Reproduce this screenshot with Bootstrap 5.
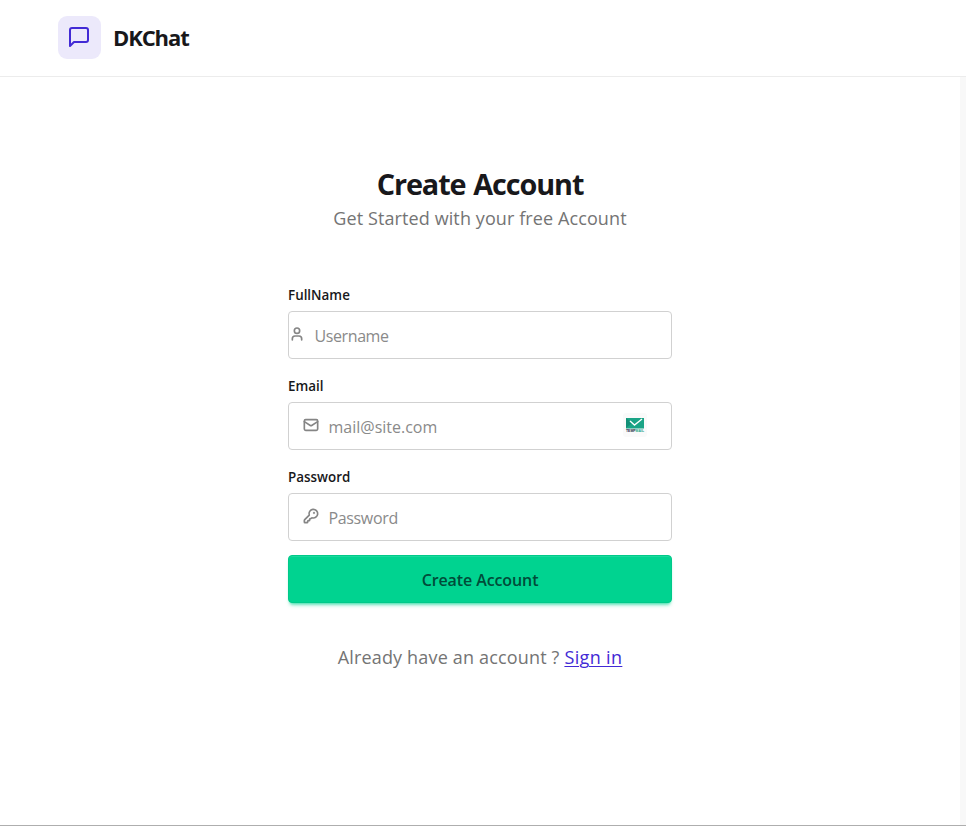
<!DOCTYPE html>
<html lang="en">
<head>
<meta charset="utf-8">
<meta name="viewport" content="width=device-width, initial-scale=1">
<title>DKChat</title>
<link href="https://cdn.jsdelivr.net/npm/bootstrap@5.3.0/dist/css/bootstrap.min.css" rel="stylesheet">
<style>
  body { font-family: "Segoe UI", "Open Sans", "Noto Sans", sans-serif; color: #18181b; height: 100vh; overflow: hidden; border-bottom: 1px solid #aeaeae; background: #fff; }
  .topbar { height: 77px; border-bottom: 1px solid #ececec; padding: 0 58px 2px; flex: none; }
  .logo-box { width: 43px; height: 43px; border-radius: 9px; background: #ece9fb; color: #422ad5; }
  .logo-box svg { margin: 0 1px 1px 0; }
  .brand-name { font-size: 22px; line-height: 28px; letter-spacing: -1.1px; padding-bottom: 1px; }
  .page { border-right: 6px solid #f8f8f8; padding-top: 90px; }
  .signup { width: 384px; }
  .headline { font-size: 28.8px; line-height: 34px; letter-spacing: -1.1px; word-spacing: 1.5px; }
  .muted { color: #747474; font-size: 18px; line-height: 27px; }
  .sub { margin-top: 4px; letter-spacing: .1px; }
  .signup form { margin-top: 53px; }
  .field-label { font-size: 13.4px; line-height: 20px; margin-bottom: 6px; }
  .field { height: 48px; border: 1px solid #d1d1d1; border-radius: 4px; padding: 0 14px; color: #858585; margin-bottom: 17px; }
  .field svg { flex: none; margin-bottom: 2px; }
  .field input { font-size: 16px; padding: 2px 0 0 1.5px; letter-spacing: -.35px; }
  .field input::placeholder { color: #8a8a8a; opacity: 1; }
  #name { letter-spacing: -.4px; }
  #email { letter-spacing: 0; }
  .field-tight { padding-left: 0; }
  .field-mail { padding-right: 16px; }
  .field-last { margin-bottom: 14px; }
  .submit { height: 48px; border-radius: 4px; background: #00d390; border: 1px solid #00c989; color: #004c39; font-size: 16px; letter-spacing: -.1px; padding: 1px 0 0; box-shadow: inset 0 1px 0 #1ad99c, 0 3px 3px -2px #00d39099, 0 4px 4px -2px #00d39066; }
  .signin { margin-top: 41px; letter-spacing: .17px; }
  .signin a { color: #422ad5; letter-spacing: .35px; text-underline-offset: 2px; text-decoration-thickness: 1px; }
</style>
<script src="https://cdn.jsdelivr.net/npm/bootstrap@5.3.0/dist/js/bootstrap.bundle.min.js" defer></script>
</head>
<body class="d-flex flex-column">
  <header class="topbar d-flex align-items-center">
    <div class="logo-box d-flex align-items-center justify-content-center">
      <svg width="24" height="24" viewBox="0 0 24 24" fill="none" stroke="currentColor" stroke-width="2" stroke-linecap="round" stroke-linejoin="round"><path d="M21 15a2 2 0 0 1-2 2H7l-4 4V5a2 2 0 0 1 2-2h14a2 2 0 0 1 2 2z"/></svg>
    </div>
    <span class="brand-name fw-bold ms-2 ps-1">DKChat</span>
  </header>
  <main class="page flex-grow-1 d-flex flex-column align-items-center">
    <div class="signup">
      <div class="text-center">
        <h1 class="headline fw-bold m-0">Create Account</h1>
        <p class="muted sub mb-0">Get Started with your free Account</p>
      </div>
      <form>
        <label class="field-label fw-semibold d-block" for="name">FullName</label>
        <div class="field field-tight d-flex align-items-center">
          <svg width="16" height="16" viewBox="0 0 24 24" fill="none" stroke="currentColor" stroke-width="2.5" stroke-linecap="round" stroke-linejoin="round"><path d="M19 21v-2a4 4 0 0 0-4-4H9a4 4 0 0 0-4 4v2"/><circle cx="12" cy="7" r="4"/></svg>
          <input id="name" class="form-control border-0 shadow-none bg-transparent ms-2 me-0" type="text" placeholder="Username">
        </div>
        <label class="field-label fw-semibold d-block" for="email">Email</label>
        <div class="field field-mail d-flex align-items-center">
          <svg width="16" height="16" viewBox="0 0 24 24" fill="none" stroke="currentColor" stroke-width="2.5" stroke-linecap="round" stroke-linejoin="round"><rect width="20" height="16" x="2" y="4" rx="2"/><path d="m22 7-8.97 5.7a1.94 1.94 0 0 1-2.06 0L2 7"/></svg>
          <input id="email" class="form-control border-0 shadow-none bg-transparent ms-2" type="email" placeholder="mail@site.com">
          <svg class="me-2" width="24" height="24" viewBox="0 0 24 24"><rect width="24" height="24" rx="3" fill="#fafafa"/><rect x="3" y="5" width="18" height="10.5" fill="#1aa486"/><path d="M3 5l6 5-6 5z" fill="#128f77"/><path d="M7 8l4.5 4L19 6" fill="none" stroke="#fff" stroke-width="1.4"/><text x="3" y="19" font-family="Liberation Sans" font-weight="700" font-size="3.8" textLength="18" lengthAdjust="spacingAndGlyphs" fill="#14213d">TEMP<tspan fill="#1aa486">MAIL</tspan></text></svg>
        </div>
        <label class="field-label fw-semibold d-block" for="password">Password</label>
        <div class="field field-last d-flex align-items-center">
          <svg width="16" height="16" viewBox="0 0 24 24" fill="none" stroke="currentColor" stroke-width="2.5" stroke-linecap="round" stroke-linejoin="round"><path d="M2.586 17.414A2 2 0 0 0 2 18.828V21a1 1 0 0 0 1 1h3a1 1 0 0 0 1-1v-1a1 1 0 0 1 1-1h1a1 1 0 0 0 1-1v-1a1 1 0 0 1 1-1h.172a2 2 0 0 0 1.414-.586l.814-.814a6.5 6.5 0 1 0-4-4z"/><circle cx="16.5" cy="7.5" r=".5" fill="currentColor"/></svg>
          <input id="password" class="form-control border-0 shadow-none bg-transparent ms-2" type="password" placeholder="Password">
        </div>
        <button type="button" class="submit btn w-100 d-block fw-semibold">Create Account</button>
      </form>
      <p class="signin muted text-center mb-0">Already have an account ? <a href="#">Sign in</a></p>
    </div>
  </main>
</body>
</html>
